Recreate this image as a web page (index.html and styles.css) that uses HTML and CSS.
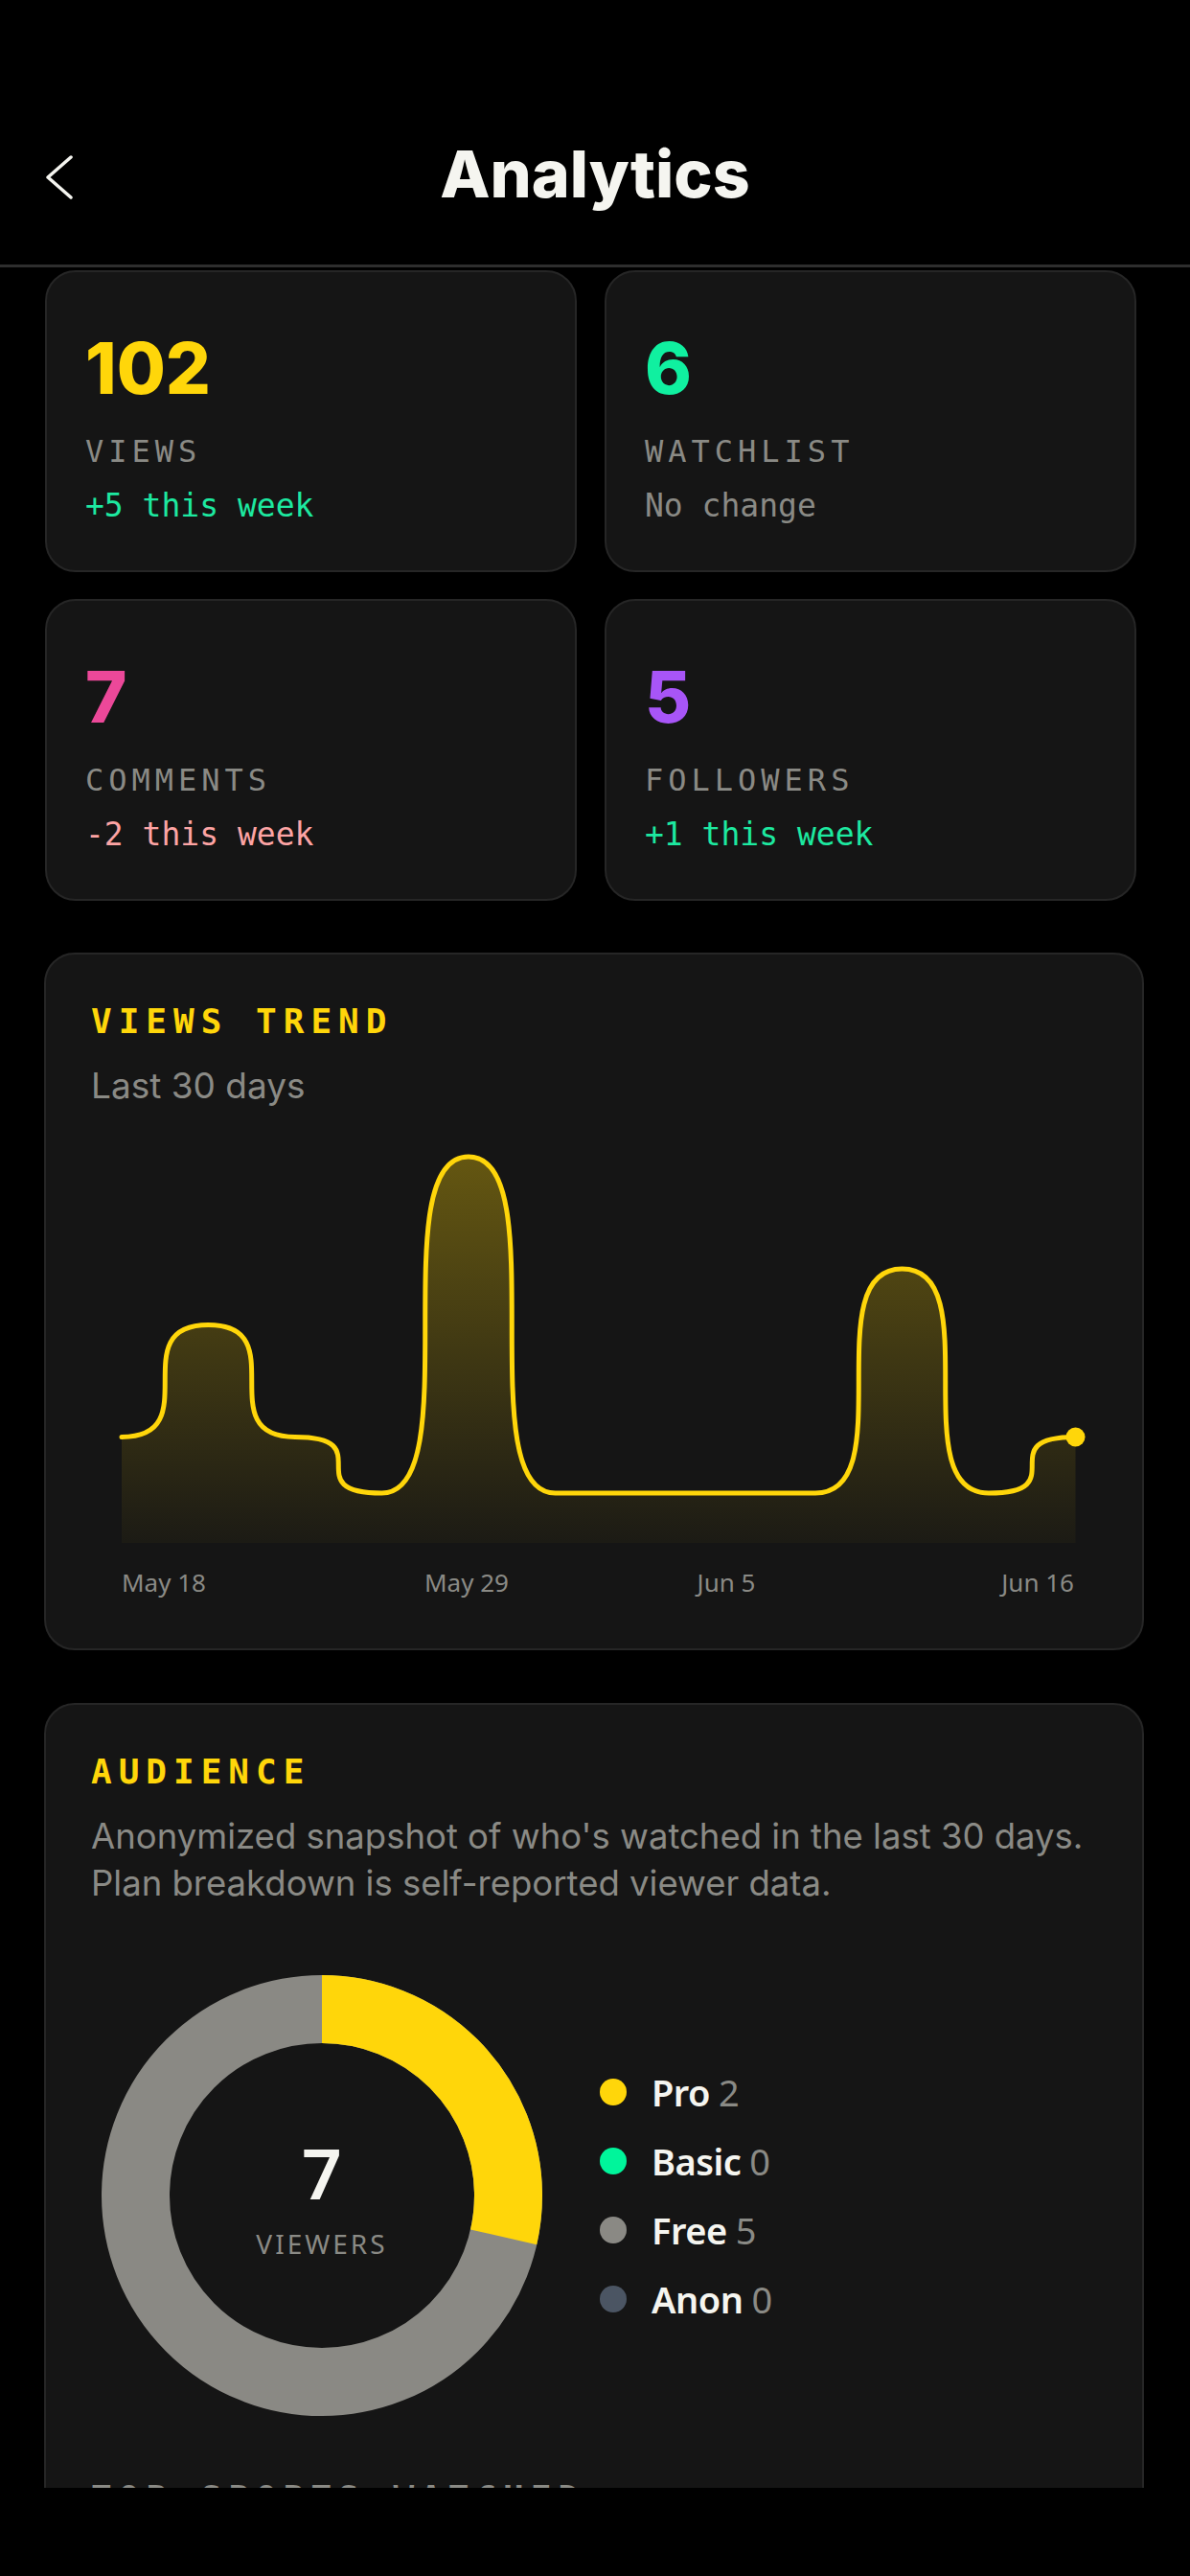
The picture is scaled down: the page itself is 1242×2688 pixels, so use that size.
FILE: index.html
```html
<!DOCTYPE html>
<html lang="en">
<head>
<meta charset="UTF-8" />
<meta name="viewport" content="width=device-width, initial-scale=1.0" />
<title>Analytics</title>
<link rel="stylesheet" href="styles.css">
</head>
<body>

<header class="topbar">
  <button class="back" aria-label="Back">
    <svg width="32" height="46" viewBox="0 0 32 46">
      <polyline points="27,2 3,23 27,44" fill="none" stroke="#f5f5f0" stroke-width="3.5" stroke-linecap="round" stroke-linejoin="round" />
    </svg>
  </button>
  <h1 class="title">Analytics</h1>
  <span class="spacer"></span>
</header>

<main class="content">

  <section class="stats">
    <div class="stat">
      <div class="stat-value yellow">102</div>
      <div class="stat-label">VIEWS</div>
      <div class="stat-delta up">+5 this week</div>
    </div>
    <div class="stat">
      <div class="stat-value green">6</div>
      <div class="stat-label">WATCHLIST</div>
      <div class="stat-delta flat">No change</div>
    </div>
    <div class="stat">
      <div class="stat-value pink">7</div>
      <div class="stat-label">COMMENTS</div>
      <div class="stat-delta down">-2 this week</div>
    </div>
    <div class="stat">
      <div class="stat-value purple">5</div>
      <div class="stat-label">FOLLOWERS</div>
      <div class="stat-delta up">+1 this week</div>
    </div>
  </section>

  <section class="panel trend">
    <h2 class="panel-title">VIEWS TREND</h2>
    <p class="panel-sub">Last 30 days</p>
    <svg class="chart" width="1050" height="510" viewBox="0 0 1050 510">
      <defs>
        <linearGradient id="trendFill" x1="0" y1="0" x2="0" y2="1">
          <stop offset="0" stop-color="#ffd60a" stop-opacity="0.34" />
          <stop offset="1" stop-color="#ffd60a" stop-opacity="0.03" />
        </linearGradient>
      </defs>
      <path fill="url(#trendFill)" d="M32 329.5 C122.5 329.5 32 212.5 122.5 212.5 C213 212.5 122.5 329.5 213 329.5 C303.5 329.5 213 388 303.5 388 C394 388 303.5 37 394 37 C484.5 37 394 388 484.5 388 L756 388 C846.5 388 756 154 846.5 154 C937 154 846.5 388 937 388 C1027.5 388 937 329.5 1027.5 329.5 L1027.5 440 L32 440 Z" />
      <path fill="none" stroke="#ffd60a" stroke-width="5" stroke-linecap="round" stroke-linejoin="round" d="M32 329.5 C122.5 329.5 32 212.5 122.5 212.5 C213 212.5 122.5 329.5 213 329.5 C303.5 329.5 213 388 303.5 388 C394 388 303.5 37 394 37 C484.5 37 394 388 484.5 388 L756 388 C846.5 388 756 154 846.5 154 C937 154 846.5 388 937 388 C1027.5 388 937 329.5 1027.5 329.5" />
      <circle cx="1027.5" cy="329.5" r="10" fill="#ffd60a" />
      <text class="axis" x="32" y="491">May 18</text>
      <text class="axis" x="392" y="491" text-anchor="middle">May 29</text>
      <text class="axis" x="663" y="491" text-anchor="middle">Jun 5</text>
      <text class="axis" x="1026" y="491" text-anchor="end">Jun 16</text>
    </svg>
  </section>

  <section class="panel audience">
    <h2 class="panel-title">AUDIENCE</h2>
    <p class="panel-text">Anonymized snapshot of who's watched in the last 30 days.<br>Plan breakdown is self-reported viewer data.</p>

    <div class="audience-body">
      <div class="donut">
        <svg width="460" height="460" viewBox="0 0 460 460">
          <circle cx="230" cy="230" r="194.5" fill="none" stroke="#8a8984" stroke-width="71" />
          <circle cx="230" cy="230" r="194.5" fill="none" stroke="#ffd60a" stroke-width="71"
                  stroke-dasharray="349.17 1222.08" transform="rotate(-90 230 230)" />
        </svg>
        <div class="donut-center">
          <div class="donut-num">7</div>
          <div class="donut-label">VIEWERS</div>
        </div>
      </div>

      <ul class="legend">
        <li><span class="dot yellow-bg"></span><span class="legend-name">Pro</span><span class="legend-count">2</span></li>
        <li><span class="dot green-bg"></span><span class="legend-name">Basic</span><span class="legend-count">0</span></li>
        <li><span class="dot gray-bg"></span><span class="legend-name">Free</span><span class="legend-count">5</span></li>
        <li><span class="dot slate-bg"></span><span class="legend-name">Anon</span><span class="legend-count">0</span></li>
      </ul>
    </div>

    <h2 class="panel-title muted">TOP SPORTS WATCHED</h2>
  </section>

</main>

</body>
</html>
```

FILE: styles.css
```css
body {
  margin: 0;
  background: #000;
  color: #f5f5f0;
  font-family: 'Inter', 'Noto Sans', sans-serif;
  width: 1242px;
  height: 2688px;
  overflow: hidden;
}

.topbar {
  box-sizing: border-box;
  height: 279px;
  padding-top: 141px;
  display: grid;
  grid-template-columns: 1fr auto 1fr;
  align-items: start;
  border-bottom: 3px solid #2e2e2e;
}

.back {
  justify-self: start;
  margin: 21px 0 0 47px;
  padding: 0;
  border: none;
  background: none;
  cursor: pointer;
  line-height: 0;
}

.title {
  margin: 0;
  font-size: 68px;
  line-height: 80px;
  font-weight: 800;
  letter-spacing: 0;
  color: #f5f5f0;
}

.content {
  height: 2317px;
  overflow: hidden;
}

/* stat tiles */
.stats {
  display: grid;
  grid-template-columns: 1fr 1fr;
  gap: 28px 29px;
  margin: 3px 56px 0 47px;
}

.stat {
  box-sizing: border-box;
  height: 315px;
  padding: 63px 40px 0;
  background: #151515;
  border: 2px solid #262626;
  border-radius: 32px;
}

.stat-value {
  font-size: 74px;
  line-height: 75px;
  font-weight: 800;
  letter-spacing: 0;
}

.stat-label {
  margin-top: 29px;
  font-family: 'DejaVu Sans Mono', monospace;
  font-size: 32px;
  line-height: 40px;
  letter-spacing: 5px;
  color: #8a8a85;
}

.stat-delta {
  margin-top: 17px;
  font-family: 'DejaVu Sans Mono', monospace;
  font-size: 33px;
  line-height: 40px;
}

.yellow { color: #ffd60a; }
.green { color: #10f0a0; }
.pink { color: #ec4899; }
.purple { color: #a855f7; }

.up { color: #1de9a0; }
.flat { color: #8a8a85; }
.down { color: #fda4a4; }

/* panels */
.panel {
  background: #151515;
  border: 2px solid #262626;
  border-radius: 32px;
  margin: 0 48px 0 46px;
  padding: 48px 47px 40px;
}

.trend {
  margin-top: 54px;
}

.audience {
  margin-top: 55px;
  padding-bottom: 80px;
}

.panel-title {
  margin: 0;
  font-family: 'DejaVu Sans Mono', monospace;
  font-size: 36px;
  line-height: 44px;
  font-weight: 700;
  letter-spacing: 7px;
  color: #ffd60a;
}

.panel-title.muted {
  margin-top: 64px;
  color: #8a8a85;
}

.panel-sub {
  margin: 23px 0 0;
  font-size: 37px;
  line-height: 44px;
  color: #8a8a85;
}

.panel-text {
  margin: 21px 0 0;
  font-size: 36.5px;
  line-height: 49px;
  color: #8a8a85;
}

.chart {
  display: block;
  margin-top: 15px;
}

.axis {
  font-family: 'Noto Sans', sans-serif;
  font-size: 26px;
  fill: #8a8a85;
}

/* audience donut */
.audience-body {
  display: flex;
  align-items: center;
  gap: 60px;
  margin: 71px 0 0 11px;
}

.donut {
  position: relative;
  width: 460px;
  height: 460px;
}

.donut svg {
  display: block;
}

.donut-center {
  position: absolute;
  top: 169px;
  left: 0;
  right: 0;
  text-align: center;
  font-family: 'Noto Sans', sans-serif;
}

.donut-num {
  font-size: 73px;
  line-height: 73px;
  font-weight: 600;
  color: #f5f5f0;
}

.donut-label {
  margin-top: 24px;
  font-size: 28px;
  line-height: 28px;
  letter-spacing: 3px;
  color: #8a8a85;
}

.legend {
  list-style: none;
  margin: 0;
  padding: 0;
  display: flex;
  flex-direction: column;
  gap: 24px;
  font-family: 'Noto Sans', sans-serif;
  font-size: 38px;
  line-height: 48px;
}

.legend li {
  display: flex;
  align-items: center;
}

.dot {
  width: 28px;
  height: 28px;
  border-radius: 50%;
  margin-right: 26px;
}

.yellow-bg { background: #ffd60a; }
.green-bg { background: #00f59b; }
.gray-bg { background: #8a8984; }
.slate-bg { background: #4b5563; }

.legend-name {
  font-weight: 600;
  color: #f5f5f0;
  letter-spacing: -0.5px;
}

.legend-count {
  margin-left: 9px;
  color: #8a8a85;
}
```
